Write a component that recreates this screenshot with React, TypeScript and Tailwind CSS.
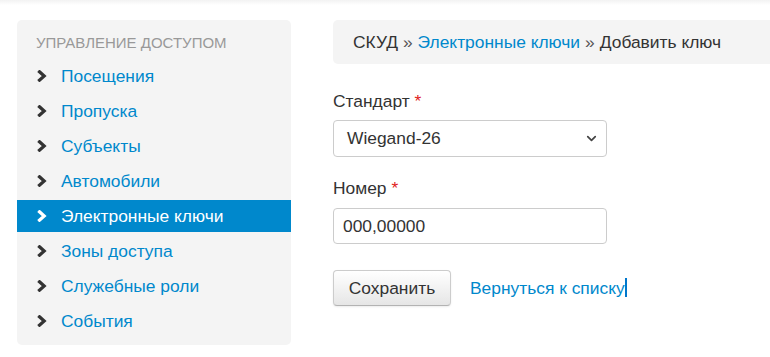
import { ChevronDown } from "lucide-react";

const menuItems = [
  { label: "Посещения" },
  { label: "Пропуска" },
  { label: "Субъекты" },
  { label: "Автомобили" },
  { label: "Электронные ключи", active: true },
  { label: "Зоны доступа" },
  { label: "Служебные роли" },
  { label: "События" },
];

function Chevron({ color }: { color: string }) {
  return (
    <svg width="10" height="12" viewBox="0 0 10 12" className="shrink-0">
      <polyline points="2.5,1.8 7.2,6 2.5,10.2" fill="none" stroke={color} strokeWidth="3.2" strokeLinecap="square" />
    </svg>
  );
}

export default function App() {
  return (
    <div
      className="w-full h-screen overflow-hidden bg-white text-[#333] text-[17.4px]"
      style={{ fontFamily: '"Liberation Sans", Arial, sans-serif' }}
    >
      {/* faint shadow from the bar above */}
      <div className="h-[5px] bg-gradient-to-b from-[#f2f2f2] to-white" />

      <div className="flex items-start pt-[15px] pl-[17px] gap-[42px]">
        {/* Sidebar */}
        <aside className="w-[274px] shrink-0 bg-[#f4f4f4] rounded-[5px] pt-[14px] pb-[8px]">
          <div className="px-[19px] text-[15px] leading-[18px] text-[#999] uppercase">
            Управление доступом
          </div>
          <ul className="mt-[8px] flex flex-col gap-[3px]">
            {menuItems.map((item) => (
              <li
                key={item.label}
                className={`h-[32px] flex items-center pl-[20px] gap-[14px] ${
                  item.active ? "bg-[#0088cc] text-white" : "text-[#0088cc]"
                }`}
              >
                <Chevron color={item.active ? "#ffffff" : "#333333"} />
                <span className="leading-[20px]">{item.label}</span>
              </li>
            ))}
          </ul>
        </aside>

        {/* Main */}
        <main className="w-[480px] shrink-0">
          <div className="h-[44px] bg-[#f4f4f4] rounded-[5px] flex items-center pl-[20px]">
            СКУД <span className="px-[5px] text-[#555]">»</span>
            <span className="text-[#0088cc]">Электронные ключи</span>
            <span className="px-[5px] text-[#555]">»</span> Добавить ключ
          </div>

          <div className="mt-[27px] leading-[20px]">
            Стандарт <span className="text-[#e02020]">*</span>
          </div>
          <div className="mt-[9px] w-[274px] h-[37px] border border-[#ccc] rounded-[4px] flex items-center justify-between pl-[13px] pr-[7px]">
            <span>Wiegand-26</span>
            <ChevronDown size={15} strokeWidth={2.75} className="text-[#444]" />
          </div>

          <div className="mt-[21px] leading-[20px]">
            Номер <span className="text-[#e02020]">*</span>
          </div>
          <div className="mt-[10px] w-[274px] h-[36px] border border-[#ccc] rounded-[4px] flex items-center pl-[9px]">
            000,00000
          </div>

          <div className="mt-[26px] flex items-center gap-[19px]">
            <button className="w-[118px] h-[36px] rounded-[4px] border border-[#ccc] border-b-[#b3b3b3] bg-gradient-to-b from-white to-[#e6e6e6] shadow-[0_1px_2px_rgba(0,0,0,0.08)] text-[#333]">
              Сохранить
            </button>
            <span className="text-[#0088cc] flex items-center">
              Вернуться к списку
              <span className="inline-block w-[2px] h-[19px] bg-[#0077cc]" />
            </span>
          </div>
        </main>
      </div>
    </div>
  );
}
